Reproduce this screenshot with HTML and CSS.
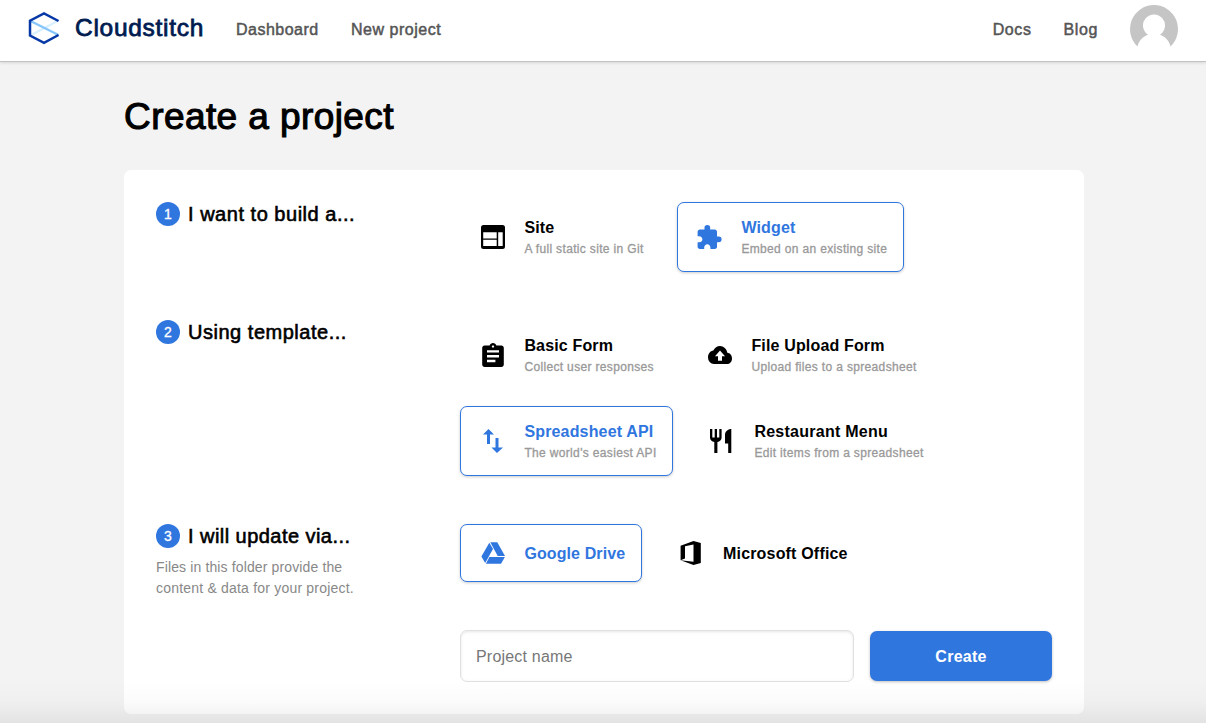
FILE: index.html
```html
<!DOCTYPE html>
<html lang="en">
<head>
<meta charset="utf-8">
<title>Cloudstitch</title>
<link rel="stylesheet" href="styles.css">
</head>
<body>
<header class="topbar">
  <a class="brand">
    <svg class="brand-mark" viewBox="0 0 32 34" fill="none">
      <path d="M1.5 25L30.5 9.500" stroke="#d9f0ff" stroke-width="2.200"/>
      <path d="M1.500 9.500L30.500 24" stroke="#85c5fb" stroke-width="2.200"/>
      <path d="M30.500 10L16 2.400L2 9.700V24.500L16 31.800L30.500 24" stroke="#0638a6" stroke-width="2.500"/>
    </svg>
    <span class="brand-name">Cloudstitch</span>
  </a>
  <nav class="nav">
    <a class="nav-dash">Dashboard</a>
    <a class="nav-new">New project</a>
  </nav>
  <nav class="nav nav-right">
    <a>Docs</a>
    <a>Blog</a>
  </nav>
  <svg class="avatar" viewBox="0 0 48 48">
    <path d="M24 0A24 24 0 0 0 7.500 41.400C9 35.500 13 31.500 18 29.800A11 11 0 1 1 30 29.800C35 31.500 39 35.500 40.500 41.400A24 24 0 0 0 24 0Z" fill="#c5c5c5"/>
  </svg>
</header>

<main class="page">
  <h1 class="title">Create a project</h1>
  <section class="card">
    <div class="row">
      <div class="step">
        <h2 class="step-title"><span class="num">1</span><span class="t1">I want to build a...</span></h2>
      </div>
      <div class="options">
        <div class="option w-site">
          <svg class="icon" viewBox="0 0 24 24"><path fill="currentColor" fill-rule="evenodd" d="M2.500 0h19A2.500 2.500 0 0 1 24 2.500v19a2.500 2.500 0 0 1-2.500 2.500h-19A2.500 2.500 0 0 1 0 21.500v-19A2.500 2.500 0 0 1 2.500 0ZM2.200 7.200v6.300h13.500V7.200ZM2.200 14.800v6.300h13.500v-6.300ZM17.200 7.200v13.900h4.500V7.200Z"/></svg>
          <div class="label"><span class="name">Site</span><span class="desc">A full static site in Git</span></div>
        </div>
        <div class="option selected w-widget">
          <svg class="icon" viewBox="2.600 1 20.500 21"><path fill="currentColor" d="M20.500 11H19V7c0-1.100-.9-2-2-2h-4V3.500a2.500 2.500 0 0 0-5 0V5H4c-1.100 0-1.990.9-1.990 2v3.800H3.500c1.490 0 2.700 1.210 2.700 2.700s-1.210 2.700-2.700 2.700H2V20c0 1.100.9 2 2 2h3.800v-1.500c0-1.490 1.210-2.700 2.700-2.700s2.700 1.210 2.700 2.700V22H17c1.100 0 2-.9 2-2v-4h1.500a2.500 2.500 0 0 0 0-5z"/></svg>
          <div class="label"><span class="name">Widget</span><span class="desc">Embed on an existing site</span></div>
        </div>
      </div>
    </div>

    <div class="row">
      <div class="step">
        <h2 class="step-title"><span class="num">2</span><span class="t2">Using template...</span></h2>
      </div>
      <div class="options">
        <div class="option w-basic">
          <svg class="icon" viewBox="2 1 20 20"><path fill="currentColor" d="M19 3h-4.180C14.400 1.840 13.300 1 12 1s-2.400.84-2.820 2H5c-1.100 0-2 .9-2 2v14c0 1.100.9 2 2 2h14c1.100 0 2-.9 2-2V5c0-1.100-.9-2-2-2zm-7 0c.55 0 1 .45 1 1s-.45 1-1 1-1-.45-1-1 .45-1 1-1zm2 14H7v-2h7v2zm3-4H7v-2h10v2zm0-4H7V7h10v2z"/></svg>
          <div class="label"><span class="name">Basic Form</span><span class="desc">Collect user responses</span></div>
        </div>
        <div class="option w-file">
          <svg class="icon icon-cloud" viewBox="0 4 24 16" preserveAspectRatio="none"><path fill="currentColor" d="M19.350 10.040C18.670 6.590 15.640 4 12 4 9.110 4 6.600 5.640 5.350 8.040 2.340 8.360 0 10.910 0 14c0 3.310 2.690 6 6 6h13c2.760 0 5-2.240 5-5 0-2.640-2.050-4.780-4.650-4.960zM14 13v4h-4v-4H7l5-5 5 5h-3z"/></svg>
          <div class="label"><span class="name">File Upload Form</span><span class="desc">Upload files to a spreadsheet</span></div>
        </div>
        <div class="option selected w-api">
          <svg class="icon" viewBox="0 0 24 24"><path fill="currentColor" d="M7.500 0L13 5.500H9V15H6V5.500H2ZM14.500 9H17.500V18.500H22L16 24L10.500 18.500H14.500Z"/></svg>
          <div class="label"><span class="name">Spreadsheet API</span><span class="desc">The world's easiest API</span></div>
        </div>
        <div class="option w-menu">
          <svg class="icon" viewBox="0 0 24 24"><path fill="currentColor" d="M0 0H2.300V8.500H4.700V0H7V8.500H9.300V0H11.600V8.500C11.600 11 9.800 12.800 7.400 13.100V24H4.300V13.100C1.800 12.800 0 11 0 8.500ZM21.300 0V24H18.200V14.500H15V6C15 2.500 18 0 21.300 0Z"/></svg>
          <div class="label label-menu"><span class="name n-menu">Restaurant Menu</span><span class="desc">Edit items from a spreadsheet</span></div>
        </div>
      </div>
    </div>

    <div class="row">
      <div class="step">
        <h2 class="step-title"><span class="num">3</span><span class="t3">I will update via...</span></h2>
        <p class="note"><span class="note-a">Files in this folder provide the</span><br><span class="note-b">content &amp; data for your project.</span></p>
      </div>
      <div class="options">
        <div class="option short selected w-drive">
          <svg class="icon" viewBox="0 0 24 24"><g fill="currentColor"><path d="M9.300 1.200H16.300L24 14.900H16.700Z"/><path d="M8.300 1.700L12 8.100L4.200 21.900L.4 15.500Z"/><path d="M8.400 15.900H23.900L20 22.700H4.900Z"/></g></svg>
          <div class="label"><span class="name n-drive">Google Drive</span></div>
        </div>
        <div class="option short w-office">
          <svg class="icon" viewBox="0 0 24 24"><path fill="currentColor" fill-rule="evenodd" d="M1.600 4.700L14.500 0L21.800 2V22L14.500 24L1.600 19.300ZM1.600 19.300L14.500 20.800V3.400L6 5.300V17.600Z"/></svg>
          <div class="label label-office"><span class="name n-office">Microsoft Office</span></div>
        </div>
      </div>
    </div>

    <form class="create">
      <input class="field" type="text" placeholder="Project name">
      <button class="submit" type="button">Create</button>
    </form>
  </section>
</main>
<div class="bottom-shade"></div>
</body>
</html>
```
FILE: styles.css
```css
* { box-sizing: border-box; }

body {
  margin: 0;
  height: 723px;
  overflow: hidden;
  position: relative;
  background: #f3f3f3;
  color: #000;
  font-family: "Liberation Sans", Arial, sans-serif;
}

.topbar {
  display: flex;
  align-items: flex-start;
  height: 62px;
  padding: 0 28px;
  background: #fff;
  border-bottom: 1px solid #c3c3c3;
  box-shadow: 0 1px 3px rgba(0, 0, 0, .12);
}

.brand { display: flex; }
.brand-mark { width: 32px; height: 34px; margin-top: 11px; }
.brand-name {
  width: 130px;
  margin: 13px 0 0 15px;
  font-size: 24.5px;
  line-height: 30px;
  letter-spacing: .72px;
  color: #001b50;
  -webkit-text-stroke: .8px;
  white-space: nowrap;
}

.nav {
  display: flex;
  gap: 32px;
  margin: 19px 0 0 31px;
  font-size: 16px;
  line-height: 21px;
  color: #555;
  -webkit-text-stroke: .5px;
  white-space: nowrap;
}
.nav-dash { width: 83px; letter-spacing: .48px; }
.nav-new { letter-spacing: .52px; }
.nav-right { margin-left: auto; letter-spacing: .6px; }
.avatar { width: 48px; height: 48px; margin: 5px 0 0 32px; }

.page { width: 960px; margin: 0 auto; position: relative; left: 1px; }

.title {
  margin: 0;
  padding-top: 31px;
  height: 108px;
  font-size: 37px;
  line-height: 48px;
  font-weight: 400;
  letter-spacing: .42px;
  -webkit-text-stroke: 1.1px;
}

.card {
  display: flex;
  flex-direction: column;
  gap: 48px;
  height: 544px;
  padding: 32px;
  background: #fff;
  border-radius: 7px;
}

.row { display: grid; grid-template-columns: 304px 1fr; }

.step-title {
  display: flex;
  align-items: center;
  gap: 8px;
  height: 24px;
  margin: 0;
  font-size: 20px;
  font-weight: 400;
  -webkit-text-stroke: .6px;
  white-space: nowrap;
}
.t1 { letter-spacing: .52px; }
.t2 { letter-spacing: .52px; }
.t3 { letter-spacing: .45px; }

.num {
  width: 24px;
  height: 24px;
  border-radius: 50%;
  background: #3076df;
  color: #fff;
  font-size: 14px;
  line-height: 24px;
  text-align: center;
  -webkit-text-stroke: .3px;
}

.note {
  margin: 9px 0 -17px;
  font-size: 14px;
  line-height: 21px;
  color: #888;
  white-space: nowrap;
}
.note-a { letter-spacing: .13px; }
.note-b { letter-spacing: .2px; }

.options { display: flex; flex-wrap: wrap; align-items: flex-start; gap: 16px; }

.option {
  display: flex;
  align-items: center;
  height: 70px;
  padding-left: 20px;
  border: 1px solid transparent;
  border-radius: 7px;
  white-space: nowrap;
}
.option.short { height: 58px; }
.option.selected {
  color: #3076df;
  border-color: #3076df;
  background: #fff;
  box-shadow: 0 1px 3px rgba(0, 0, 0, .2);
}

.w-site { width: 201px; }
.w-widget { width: 227px; }
.w-basic { width: 211px; }
.w-file { width: 240px; }
.w-api { width: 213px; }
.w-menu { width: 240px; }
.w-drive { width: 182px; }
.w-office { width: 206px; }

.icon { flex: none; width: 24px; height: 24px; overflow: visible; }
.icon-cloud { height: 18px; }

.label { display: flex; flex-direction: column; margin-left: 19.4px; padding-top: 2px; }
.label-menu { margin-left: 20.4px; }
.label-office { margin-left: 20px; }
.name { font-size: 16px; line-height: 22px; font-weight: 700; letter-spacing: .16px; }
.n-menu { letter-spacing: .26px; }
.n-drive { letter-spacing: .1px; }
.n-office { letter-spacing: .18px; }
.desc { font-size: 12px; line-height: 20px; color: #999; letter-spacing: .34px; -webkit-text-stroke: .3px; }

.create { display: flex; gap: 16px; margin-left: 304px; }

.field {
  width: 394px;
  height: 52px;
  padding: 2px 15px 0;
  border: 1px solid #e0e0e0;
  border-radius: 7px;
  background: #fff;
  box-shadow: inset 0 1px 3px rgba(0, 0, 0, .1);
  font: 16px "Liberation Sans", Arial, sans-serif;
  letter-spacing: .2px;
}
.field::placeholder { color: #777; }

.submit {
  width: 182px;
  height: 50px;
  margin-top: 1px;
  padding: 1px 0 0;
  border: 0;
  border-radius: 7px;
  background: #3076df;
  box-shadow: 0 1px 3px rgba(0, 0, 0, .25);
  color: #fff;
  font: 700 16px "Liberation Sans", Arial, sans-serif;
  letter-spacing: .25px;
}

.bottom-shade {
  position: absolute;
  inset: auto 0 0;
  height: 42px;
  background: linear-gradient(rgba(0, 0, 0, 0), rgba(0, 0, 0, .015) 50%, rgba(0, 0, 0, .065));
  pointer-events: none;
}
```
